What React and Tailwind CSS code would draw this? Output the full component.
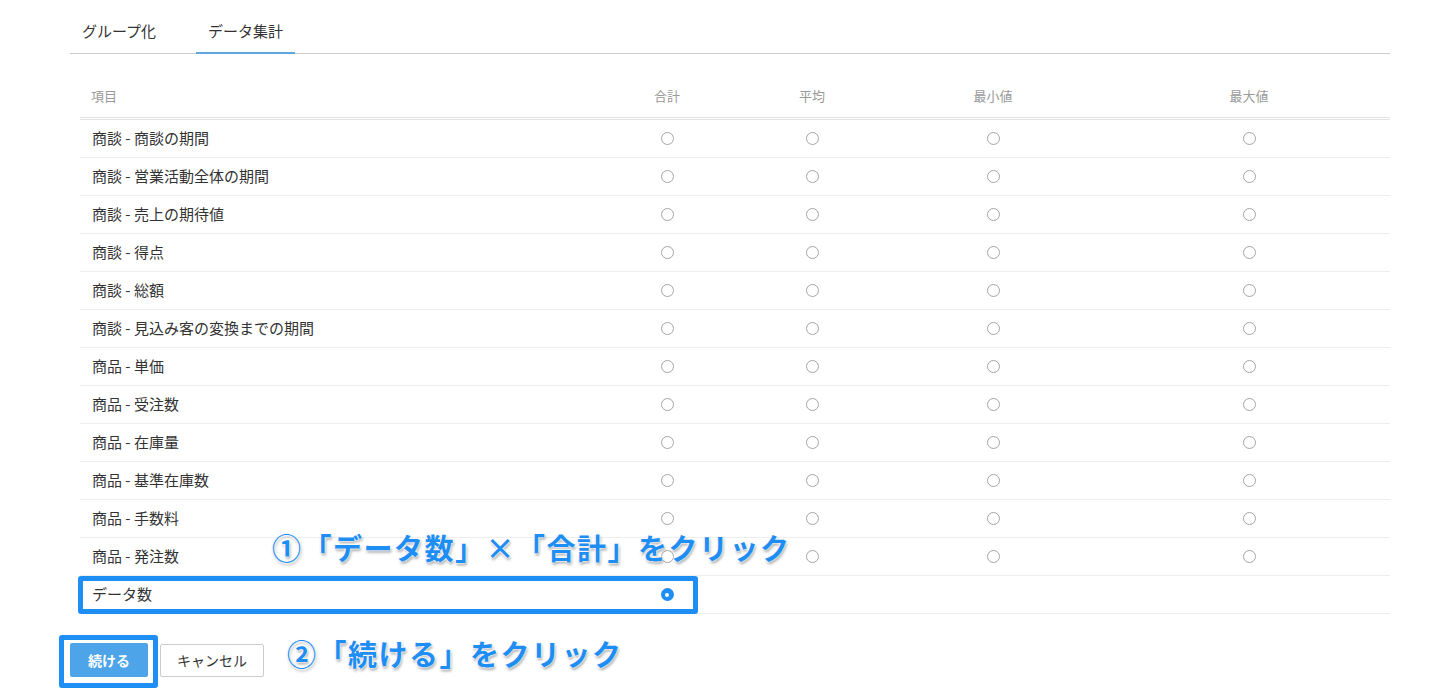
const rows = [
  "商談 - 商談の期間",
  "商談 - 営業活動全体の期間",
  "商談 - 売上の期待値",
  "商談 - 得点",
  "商談 - 総額",
  "商談 - 見込み客の変換までの期間",
  "商品 - 単価",
  "商品 - 受注数",
  "商品 - 在庫量",
  "商品 - 基準在庫数",
  "商品 - 手数料",
  "商品 - 発注数",
];

const cols = ["合計", "平均", "最小値", "最大値"];
const grid = "grid grid-cols-[508px_158px_132px_230px_282px]";
const font = { fontFamily: '"Noto Sans CJK JP", "Noto Sans", sans-serif' };

function Radio() {
  return <span className="block w-[13px] h-[13px] rounded-full border border-[#a5a5a5] bg-white" />;
}

const callout =
  "absolute whitespace-nowrap font-bold text-[29px] leading-none tracking-[1.5px] text-[#1f8ef4] [text-shadow:0_0_2px_#fff,0_0_2px_#fff,0_0_3px_#fff,1px_2px_3px_rgba(0,0,0,0.45)]";

export default function App() {
  return (
    <div className="relative min-h-[697px] bg-white text-[#333]" style={font}>
      <div className="ml-[70px] w-[1320px]">
        {/* tabs */}
        <div className="flex border-b border-[#ccc] h-[54px]">
          <button className="px-3 pt-[20px] pb-[12px] text-[15px] leading-[22px] text-[#333]">グループ化</button>
          <button className="ml-[28px] px-3 pt-[20px] pb-[11px] text-[15px] leading-[22px] text-[#333] border-b-2 border-[#5ea6e0] -mb-px">
            データ集計
          </button>
        </div>

        {/* table */}
        <div className="ml-[10px] w-[1310px] mt-[21px]">
          <div className={`${grid} h-[45px] items-center border-b-[3px] border-double border-[#e2e2e2] text-[13px] text-[#999]`}>
            <div className="pl-[11px]">項目</div>
            {cols.map((c) => (
              <div key={c} className="text-center">{c}</div>
            ))}
          </div>

          {rows.map((r) => (
            <div key={r} className={`${grid} h-[38px] items-center border-b border-[#eee] text-[15px]`}>
              <div className="pl-3">{r}</div>
              {cols.map((c) => (
                <div key={c} className="flex justify-center">
                  <Radio />
                </div>
              ))}
            </div>
          ))}

          <div className={`${grid} relative h-[38px] items-center border-b border-[#eee] text-[15px]`}>
            <div className="pl-3">データ数</div>
            <div className="flex justify-center">
              <span className="relative z-10 flex items-center justify-center w-[13px] h-[13px] rounded-full bg-[#1f8ef4]">
                <span className="w-[4px] h-[4px] rounded-full bg-white" />
              </span>
            </div>
            <div />
            <div />
            <div />
            <span className="pointer-events-none absolute left-[-2px] top-0 w-[620px] h-[38px] border-[5px] border-[#1f8ef4] rounded-[3px]" />
          </div>
        </div>

        {/* buttons */}
        <div className="flex items-center mt-[29px]">
          <div className="relative">
            <button className="w-[78px] h-[34px] rounded-[2px] bg-[#4ea4e8] text-white font-bold text-[14px]">続ける</button>
            <span className="pointer-events-none absolute left-[-11px] top-[-8px] w-[99px] h-[53px] border-[5px] border-[#1f8ef4] rounded-[3px]" />
          </div>
          <button className="ml-[12px] w-[104px] h-[33px] rounded-[2px] border border-[#ccc] bg-white text-[14px] text-[#333]">
            キャンセル
          </button>
        </div>
      </div>

      {/* annotations */}
      <div className={`${callout} left-[272px] top-[533px]`}>①「データ数」×「合計」をクリック</div>
      <div className={`${callout} left-[287px] top-[639px]`}>②「続ける」をクリック</div>
    </div>
  );
}
